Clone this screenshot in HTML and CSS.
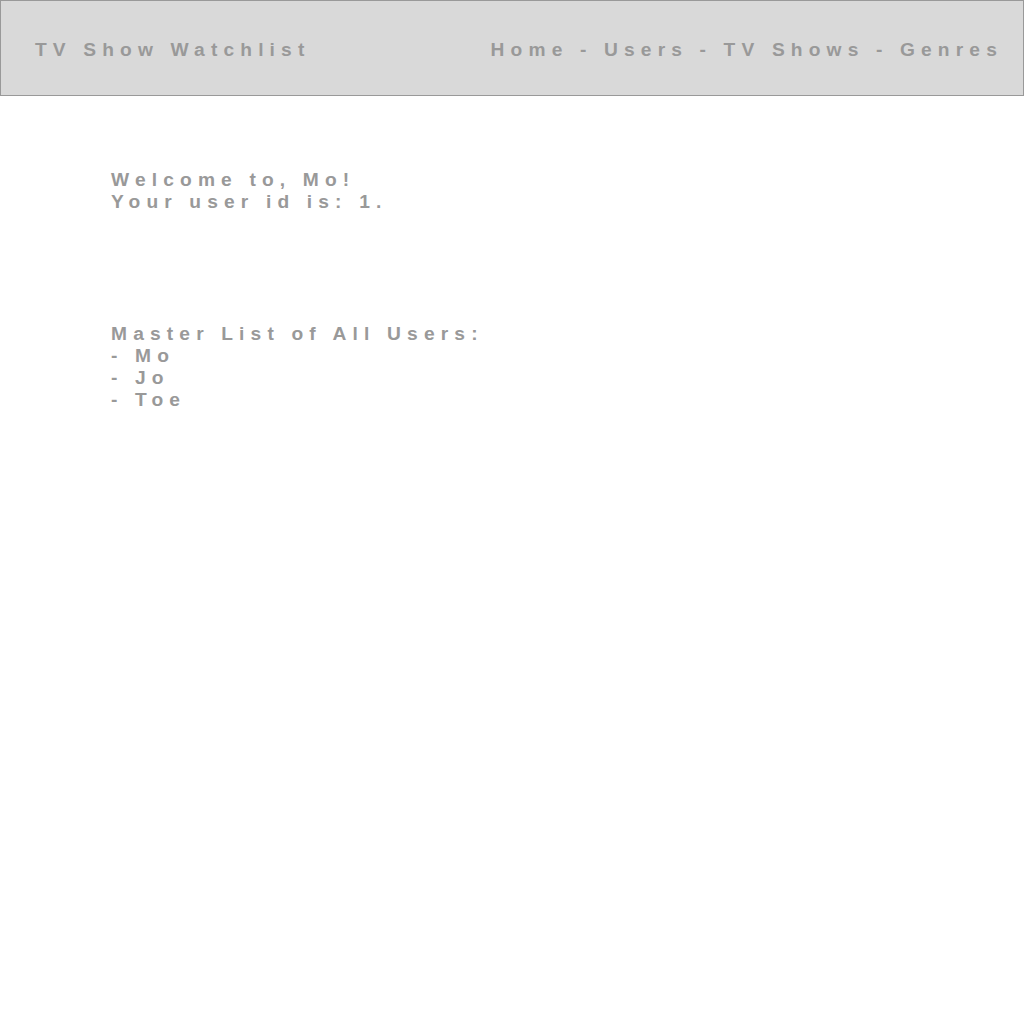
FILE: index.html
```html
<!DOCTYPE html>
<html>
<head>
<meta charset="utf-8">
<link rel="stylesheet" href="styles.css">
</head>
<body>
<header class="topbar">
  <div class="brand">TV Show Watchlist</div>
  <nav class="nav">Home - Users - TV Shows - Genres</nav>
</header>
<main class="content">
  <section class="welcome">
    <div>Welcome to, Mo!</div>
    <div>Your user id is: 1.</div>
  </section>
  <section class="users">
    <div>Master List of All Users:</div>
    <div>- Mo</div>
    <div>- Jo</div>
    <div>- Toe</div>
  </section>
</main>
</body>
</html>
```

FILE: styles.css
```css
html, body {
  margin: 0;
  padding: 0;
  background: #ffffff;
}
body {
  font-family: "Liberation Sans", Arial, sans-serif;
  font-weight: bold;
  font-size: 19.2px;
  letter-spacing: 6.15px;
  color: #999999;
}
.topbar {
  box-sizing: border-box;
  height: 96px;
  background: #d9d9d9;
  border: 1px solid #999999;
  display: flex;
  justify-content: space-between;
  align-items: center;
  padding: 4px 20px 0 34px;
}
.content {
  padding: 73px 0 0 111px;
}
.welcome {
  margin-bottom: 110px;
}
```
